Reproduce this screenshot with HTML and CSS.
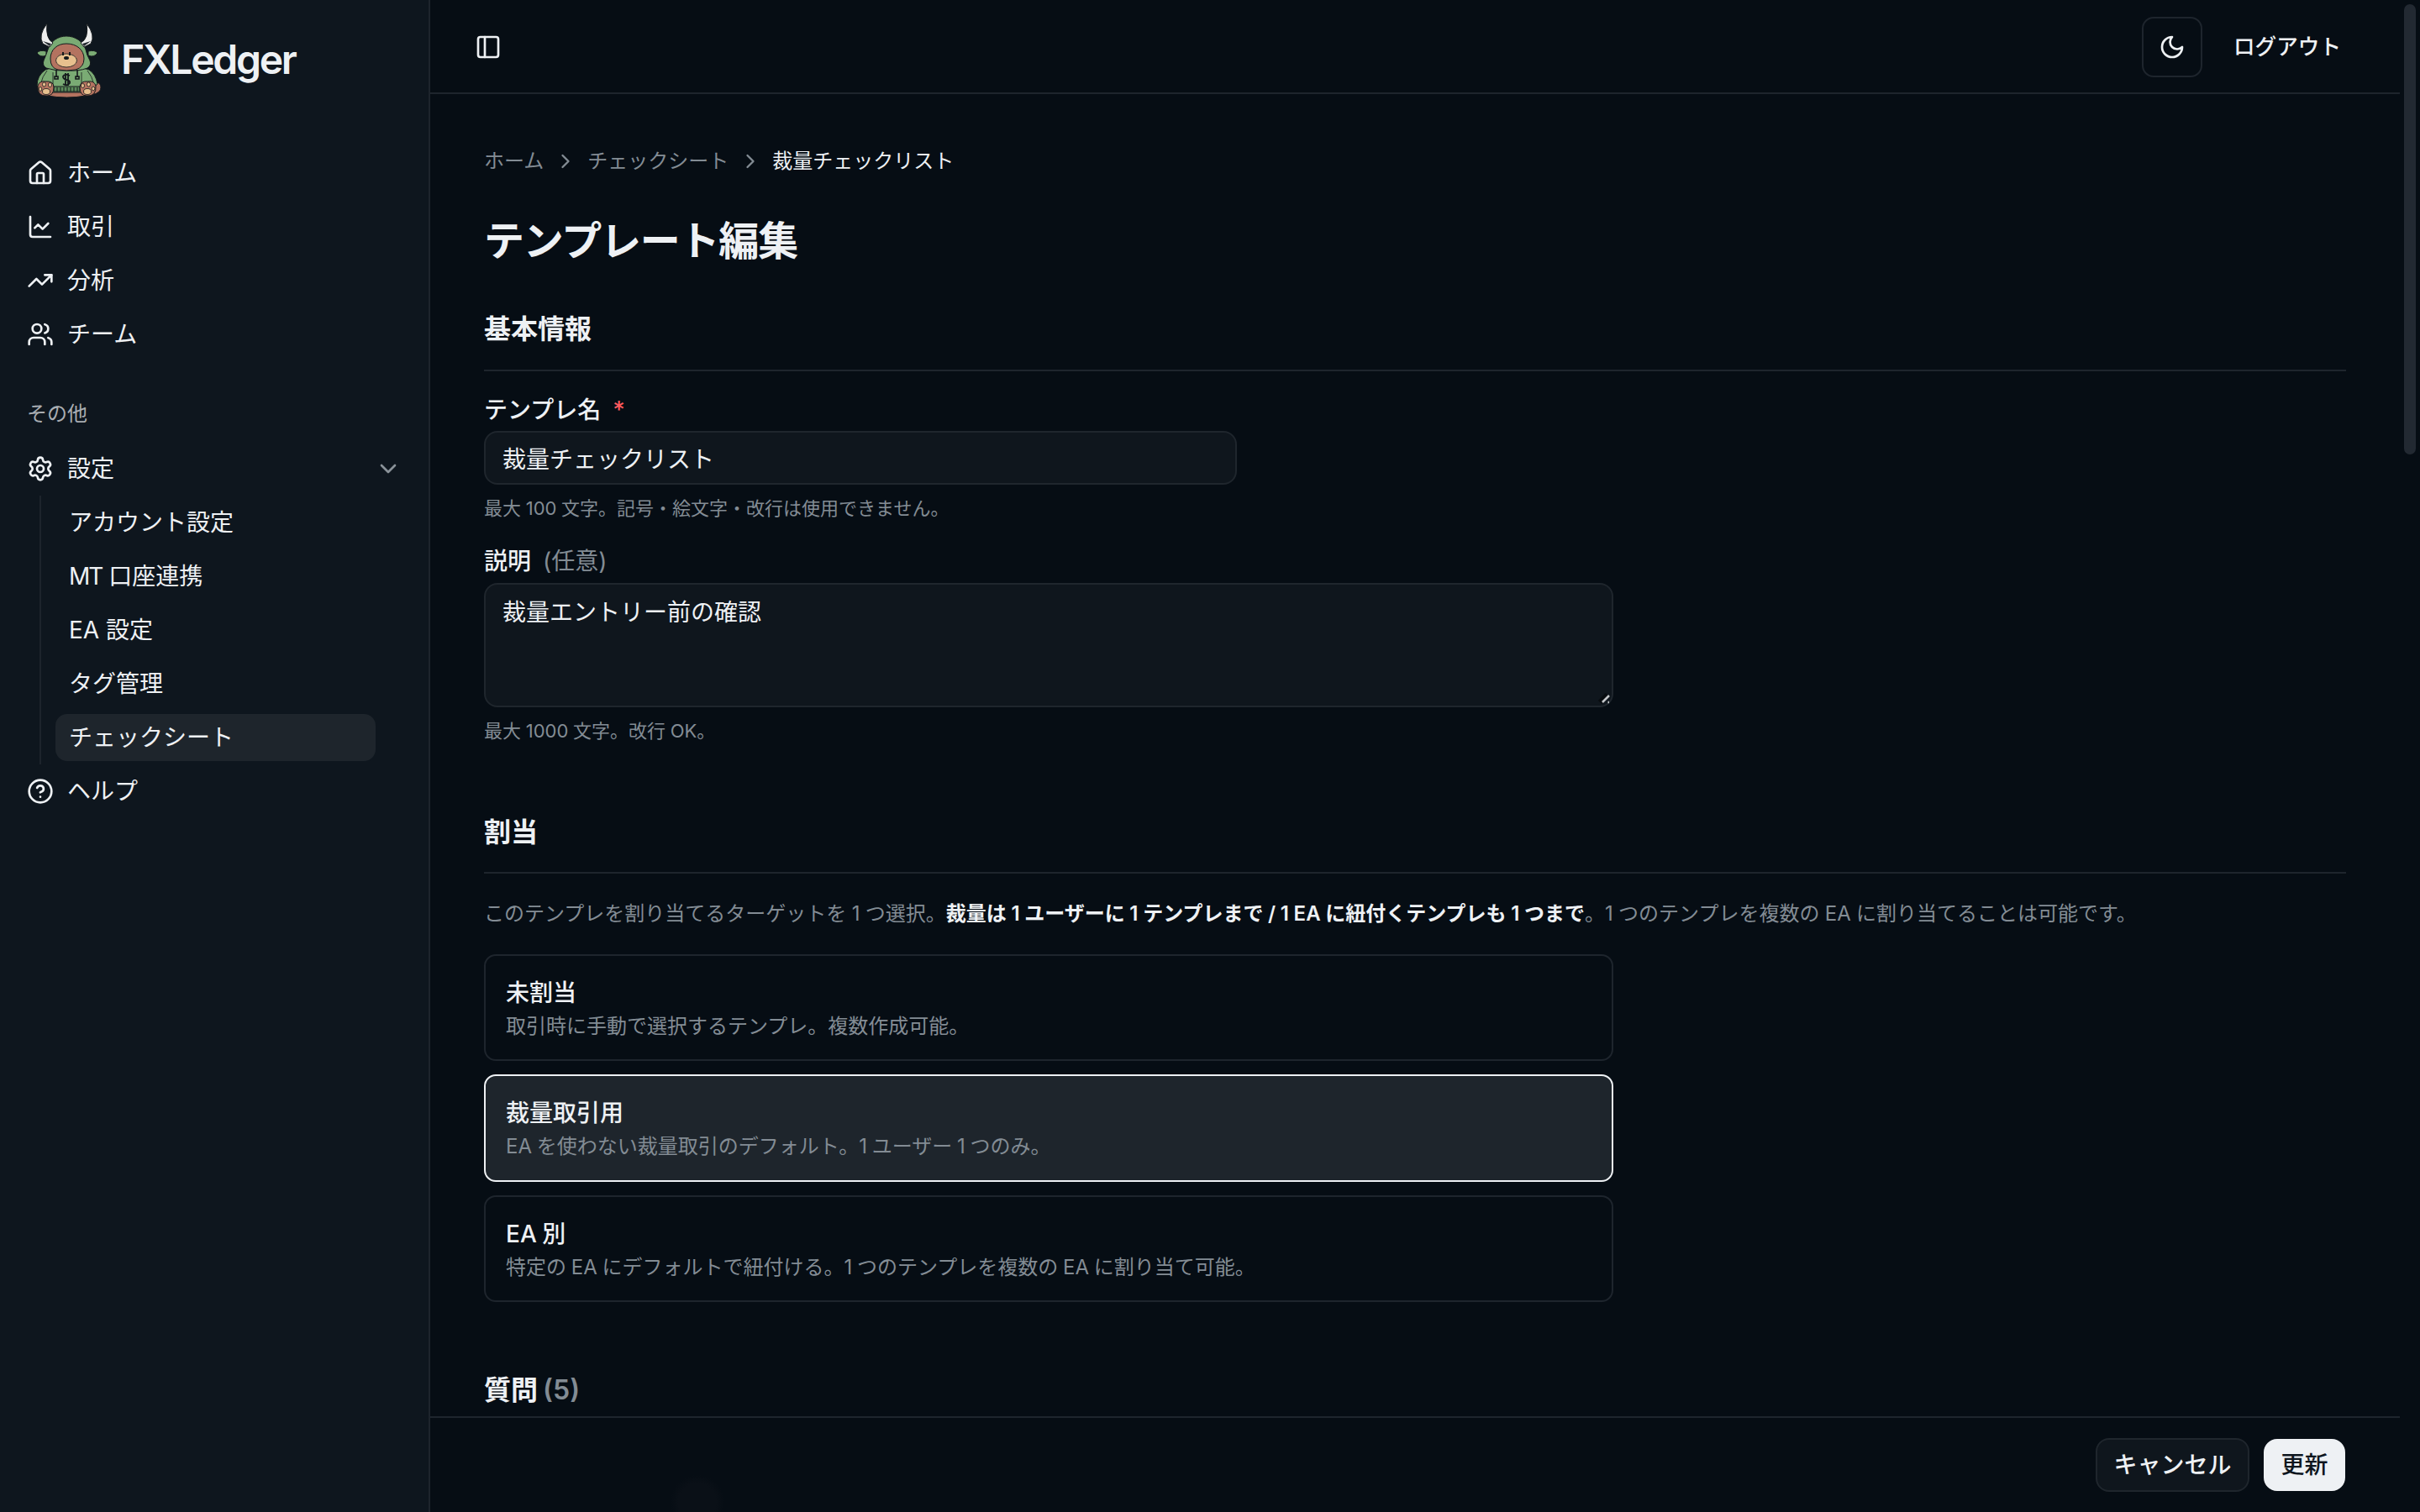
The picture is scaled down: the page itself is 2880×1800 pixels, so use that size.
FILE: index.html
```html
<!DOCTYPE html>
<html lang="ja">
<head>
<meta charset="utf-8">
<title>テンプレート編集 | FXLedger</title>
<link rel="stylesheet" href="styles.css">
</head>
<body>
<div class="layout">
	<!-- サイドバー -->
	<aside class="sidebar">
		<a class="brand">
			<svg class="mascot" viewBox="0 0 110 110">
				<!-- しっぽ・胴体 -->
				<path d="M79 82q4-5 9-3q4 5 0 10q-4 4-9 3z" fill="#b47360" stroke="#14191c"/>
				<path d="M30 88q20-6 38 0l4 6q-22 4-46 0z" fill="#b47360" stroke="#14191c"/>
				<!-- パーカー -->
				<path d="M24 63Q14 70 14 82L24 90H74L86 80Q84 68 76 63Q62 58 50 63Q36 58 24 63Z" fill="#7aab74" stroke="#14191c"/>
				<path d="M26 64q-6 8-7 14M74 64q6 8 7 14M33 66v18M67 66v18" fill="none" stroke="#14191c" stroke-width=".8"/>
				<path d="M34 83h31v6H34z" fill="#5c8c5b" stroke="#14191c"/>
				<path d="M38 84v5M42 84v5M46 84v5M50 84v5M54 84v5M58 84v5M62 84v5" stroke="#14191c" stroke-width="1"/>
				<!-- 耳 -->
				<path d="M25 41q-8-2-11 2q4 6 11 3zM75 41q8-2 11 2q-4 6-11 3z" fill="#7aab74" stroke="#14191c"/>
				<!-- フード -->
				<path d="M49 23C39 23 30 29 27 39Q25 45 22 52Q20 58 25 61Q37 65 49 64Q64 65 74 61Q79 58 77 52Q73 45 72 39C69 29 59 23 49 23Z" fill="#7aab74" stroke="#14191c"/>
				<!-- 角 -->
				<path d="M26 8Q15 22 21 32L29 36L33 31Q24 26 26 8Z" fill="#eee" stroke="#14191c"/>
				<path d="M73 8Q84 22 78 32L70 36L66 31Q76 26 73 8Z" fill="#eee" stroke="#14191c"/>
				<path d="M21 29l8 6 2-3zM78 29l-8 6-2-3z" fill="#252b31"/>
				<!-- 顔 -->
				<path d="M49 32C38 32 30 39 30 50Q30 61 39 63Q49 65 60 63Q70 60 70 50C70 39 61 32 49 32Z" fill="#b47360" stroke="#14191c"/>
				<ellipse cx="49" cy="52" rx="12.5" ry="8" fill="#e8c08e" stroke="#14191c" stroke-width=".8"/>
				<path d="M45 42v4M53 42v4" stroke="#14191c" stroke-width="2"/>
				<ellipse cx="49" cy="49" rx="3" ry="2" fill="#14191c"/>
				<!-- ひも・ロゴ -->
				<path d="M37 63v9M62 63v9M35 71h4v3h-4zM60 71h4v3h-4z" fill="#7aab74" stroke="#14191c" stroke-width="1.6"/>
				<path d="M53 70q-6-3-8 1q0 3 4 4q5 1 4 4q-3 4-8 1M48 67v15M51 67v15" fill="none" stroke="#14191c" stroke-width="1.8"/>
				<!-- 足 -->
				<path d="M15 82q2-6 9-5q10-1 10 7q0 10-8 10q-12 1-11-12z" fill="#b47360" stroke="#14191c"/>
				<path d="M65 84q0-8 10-7q7-1 9 5q1 13-11 12q-8 0-8-10z" fill="#b47360" stroke="#14191c"/>
				<g fill="#e8c08e" stroke="#14191c" stroke-width=".8">
					<ellipse cx="25" cy="89" rx="4.5" ry="3.5"/>
					<ellipse cx="18" cy="86" rx="1.8" ry="2.4"/>
					<ellipse cx="22.5" cy="80.5" rx="2" ry="2.6"/>
					<ellipse cx="29.5" cy="81" rx="2" ry="2.6"/>
					<ellipse cx="74" cy="89" rx="4.5" ry="3.5"/>
					<ellipse cx="68.5" cy="82" rx="2" ry="2.6"/>
					<ellipse cx="75.5" cy="80.5" rx="2" ry="2.6"/>
					<ellipse cx="81" cy="85.5" rx="1.8" ry="2.4"/>
				</g>
			</svg>
			<span class="brand-name">FXLedger</span>
		</a>

		<nav class="menu">
			<a class="menu-item">
				<svg class="icon" viewBox="0 0 24 24"><path d="M15 21v-8a1 1 0 0 0-1-1h-4a1 1 0 0 0-1 1v8"/><path d="M3 10a2 2 0 0 1 .709-1.528l7-5.999a2 2 0 0 1 2.582 0l7 5.999A2 2 0 0 1 21 10v9a2 2 0 0 1-2 2H5a2 2 0 0 1-2-2z"/></svg>
				<span>ホーム</span>
			</a>
			<a class="menu-item">
				<svg class="icon" viewBox="0 0 24 24"><path d="M3 3v16a2 2 0 0 0 2 2h16"/><path d="m19 9-5 5-4-4-3 3"/></svg>
				<span>取引</span>
			</a>
			<a class="menu-item">
				<svg class="icon" viewBox="0 0 24 24"><path d="M16 7h6v6"/><path d="m22 7-8.5 8.5-5-5L2 17"/></svg>
				<span>分析</span>
			</a>
			<a class="menu-item">
				<svg class="icon" viewBox="0 0 24 24"><path d="M16 21v-2a4 4 0 0 0-4-4H6a4 4 0 0 0-4 4v2"/><circle cx="9" cy="7" r="4"/><path d="M22 21v-2a4 4 0 0 0-3-3.87"/><path d="M16 3.13a4 4 0 0 1 0 7.75"/></svg>
				<span>チーム</span>
			</a>
		</nav>

		<div class="menu-label">その他</div>
		<nav class="menu menu-other">
			<a class="menu-item">
				<svg class="icon" viewBox="0 0 24 24"><path d="M9.671 4.136a2.34 2.34 0 0 1 4.659 0 2.34 2.34 0 0 0 3.319 1.915 2.34 2.34 0 0 1 2.33 4.033 2.34 2.34 0 0 0 0 3.831 2.34 2.34 0 0 1-2.33 4.033 2.34 2.34 0 0 0-3.319 1.915 2.34 2.34 0 0 1-4.659 0 2.34 2.34 0 0 0-3.32-1.915 2.34 2.34 0 0 1-2.33-4.033 2.34 2.34 0 0 0 0-3.831A2.34 2.34 0 0 1 6.35 6.051a2.34 2.34 0 0 0 3.319-1.915"/><circle cx="12" cy="12" r="3"/></svg>
				<span>設定</span>
				<svg class="icon chevron" viewBox="0 0 24 24"><path d="m6 9 6 6 6-6"/></svg>
			</a>
			<div class="submenu">
				<a class="submenu-item">アカウント設定</a>
				<a class="submenu-item"><span class="mt">MT</span> 口座連携</a>
				<a class="submenu-item">EA 設定</a>
				<a class="submenu-item">タグ管理</a>
				<a class="submenu-item active">チェックシート</a>
			</div>
			<a class="menu-item">
				<svg class="icon" viewBox="0 0 24 24"><circle cx="12" cy="12" r="10"/><path d="M9.09 9a3 3 0 0 1 5.83 1c0 2-3 3-3 3"/><path d="M12 17h.01"/></svg>
				<span>ヘルプ</span>
			</a>
		</nav>
	</aside>

	<!-- メイン -->
	<div class="main">
		<header class="topbar">
			<svg class="icon" viewBox="0 0 24 24"><rect width="18" height="18" x="3" y="3" rx="2"/><path d="M9 3v18"/></svg>
			<div class="topbar-actions">
				<button class="theme-btn"><svg class="icon" viewBox="0 0 24 24"><path d="M12 3a6 6 0 0 0 9 9 9 9 0 1 1-9-9Z"/></svg></button>
				<button class="logout-btn">ログアウト</button>
			</div>
		</header>

		<main class="content">
			<div class="breadcrumb">
				<a>ホーム</a>
				<svg class="icon" viewBox="0 0 24 24"><path d="m9 18 6-6-6-6"/></svg>
				<a>チェックシート</a>
				<svg class="icon" viewBox="0 0 24 24"><path d="m9 18 6-6-6-6"/></svg>
				<span class="current">裁量チェックリスト</span>
			</div>
			<h1>テンプレート編集</h1>

			<section class="basic">
				<h2>基本情報</h2>
				<label class="label">テンプレ名<span class="required">*</span></label>
				<input class="control" type="text" value="裁量チェックリスト">
				<p class="hint">最大 100 文字。記号・絵文字・改行は使用できません。</p>
				<label class="label label-desc">説明<span class="optional">(任意)</span></label>
				<div class="textarea-wrap">
					<textarea class="control">裁量エントリー前の確認</textarea>
					<svg class="resizer" viewBox="0 0 16 16"><path class="resizer-bg" d="M3 13 12 4"/><path d="M6 13l8-8M12.500 13h1.500"/></svg>
				</div>
				<p class="hint">最大 1000 文字。改行 OK。</p>
			</section>

			<section class="assign">
				<h2>割当</h2>
				<p class="lead">このテンプレを割り当てるターゲットを 1 つ選択。<strong>裁量は 1 ユーザーに 1 テンプレまで / 1 EA に紐付くテンプレも 1 つまで</strong>。1 つのテンプレを複数の EA に割り当てることは可能です。</p>
				<div class="options">
					<div class="option">
						<div class="option-title">未割当</div>
						<div class="option-desc">取引時に手動で選択するテンプレ。複数作成可能。</div>
					</div>
					<div class="option selected">
						<div class="option-title">裁量取引用</div>
						<div class="option-desc">EA を使わない裁量取引のデフォルト。1 ユーザー 1 つのみ。</div>
					</div>
					<div class="option">
						<div class="option-title">EA 別</div>
						<div class="option-desc">特定の EA にデフォルトで紐付ける。1 つのテンプレを複数の EA に割り当て可能。</div>
					</div>
				</div>
			</section>

			<section class="questions">
				<h2>質問 <span class="count">(5)</span></h2>
			</section>
		</main>

		<footer class="action-bar">
			<button class="btn btn-outline">キャンセル</button>
			<button class="btn btn-primary">更新</button>
		</footer>
	</div>

	<div class="scrollbar"><div class="scroll-thumb"></div></div>
</div>
</body>
</html>
```
FILE: styles.css
```css
*{padding: 0;margin: 0;box-sizing: border-box}
html,body{
	width: 100%;
	height: 100%;
	overflow: hidden;
}
body{
	background: #060d14;
	color: #eef1f4;
	font-family: Inter, "Noto Sans CJK JP", sans-serif;
	font-size: 28px;
	line-height: 40px;
}
button,input,textarea{
	font: inherit;
	color: inherit;
}
.icon{
	width: 32px;
	height: 32px;
	flex: none;
	fill: none;
	stroke: currentColor;
	stroke-width: 2;
	stroke-linecap: round;
	stroke-linejoin: round;
}
.layout{
	display: flex;
	height: 100%;
}

/* サイドバー */
.sidebar{
	width: 512px;
	flex: none;
	background: #0e161e;
	border-right: 2px solid #1d242c;
}
.brand{
	display: flex;
	align-items: center;
	height: 110px;
	margin: 20px 0 48px 30px;
}
.mascot{
	width: 110px;
	height: 110px;
}
.brand-name{
	margin: -8px 0 0 4px;
	font-size: 48px;
	font-weight: 600;
	letter-spacing: -0.047em;
}
.menu{
	display: flex;
	flex-direction: column;
	gap: 8px;
}
.menu-item{
	display: flex;
	align-items: center;
	gap: 16px;
	height: 56px;
	padding: 0 32px;
}
.chevron{
	margin-left: auto;
	color: #8a9299;
}
.menu-label{
	margin: 47px 0 17px 32px;
	font-size: 24px;
	color: #a9adb2;
}
.menu-other{gap: 4px}
.submenu{
	display: flex;
	flex-direction: column;
	gap: 8px;
	margin-left: 47px;
	padding: 4px 63px 4px 17px;
	border-left: 2px solid #1d242c;
}
.submenu-item{
	height: 56px;
	padding: 0 16px;
	line-height: 56px;
	border-radius: 14px;
}
.submenu-item.active{background: #1e252c}
.mt{letter-spacing: -2px}

/* ヘッダー */
.main{
	display: flex;
	flex-direction: column;
	flex: 1;
	min-width: 0;
}
.topbar{
	display: flex;
	align-items: center;
	justify-content: space-between;
	flex: none;
	height: 112px;
	padding: 1px 64px 0 53px;
	border-bottom: 2px solid #1e252d;
}
.topbar-actions{
	display: flex;
	align-items: center;
	gap: 16px;
}
.theme-btn{
	display: flex;
	align-items: center;
	justify-content: center;
	width: 72px;
	height: 72px;
	background: none;
	border: 2px solid #1e252d;
	border-radius: 14px;
}
.logout-btn{
	padding: 0 6px 0 21px;
	background: none;
	border: 0;
	font-size: 25.6px;
	font-weight: 500;
}

/* コンテンツ */
.content{
	flex: 1;
	min-height: 0;
	overflow: hidden;
	padding: 64px 64px 0;
}
.breadcrumb{
	display: flex;
	align-items: center;
	gap: 12px;
	height: 32px;
	font-size: 24px;
	color: #838c94;
}
.breadcrumb .icon{
	width: 28px;
	height: 28px;
}
.breadcrumb .current{color: #eef1f4}
h1{
	margin-top: 47px;
	font-size: 48px;
	font-weight: 600;
	line-height: 64px;
	letter-spacing: -0.025em;
}
h2{
	padding-bottom: 23px;
	border-bottom: 2px solid #1e252d;
	font-size: 32px;
	font-weight: 600;
	line-height: 50px;
	word-spacing: -2px;
}
.basic{margin-top: 48px}
.label{
	display: flex;
	align-items: center;
	height: 28px;
	margin: 32px 0 11px;
	font-weight: 500;
}
.required{
	margin-left: 14px;
	color: #ff5a5f;
}
.optional{
	margin-left: 14px;
	font-weight: 400;
	color: #838c94;
}
.control{
	display: block;
	width: 896px;
	height: 64px;
	padding: 0 20px;
	background: #0f161d;
	border: 2px solid #1f262d;
	border-radius: 16px;
	outline: 0;
}
.hint{
	margin-top: 12px;
	font-size: 22px;
	line-height: 32px;
	color: #838c94;
	word-spacing: -.5px;
}
.label-desc{
	margin-top: 33px;
	margin-bottom: 12px;
}
.textarea-wrap{
	position: relative;
	width: 1344px;
}
.textarea-wrap .control{
	width: 100%;
	height: 148px;
	padding-top: 13px;
	resize: none;
}
.resizer{
	position: absolute;
	right: 3px;
	bottom: 3px;
	width: 16px;
	height: 16px;
	fill: none;
	stroke: #c4c7ca;
	stroke-width: 2.5;
}
.resizer-bg{
	stroke: #070b0f;
	stroke-width: 6;
}
.assign{margin-top: 80px}
.assign h2{padding-bottom: 22px}
.lead{
	margin-top: 28px;
	font-size: 24px;
	color: #838c94;
	white-space: nowrap;
	word-spacing: -.4px;
}
.lead strong{
	font-weight: 600;
	color: #eef1f4;
}
.options{
	display: flex;
	flex-direction: column;
	gap: 16px;
	width: 1344px;
	margin-top: 28px;
}
.option{
	height: 127.3px;
	padding: 24px;
	border: 2px solid #1e252d;
	border-radius: 14px;
}
.option.selected{
	background: #1e252c;
	border-color: #eef1f4;
}
.option-title{
	font-weight: 500;
	word-spacing: -1px;
}
.option-desc{
	font-size: 24px;
	color: #838c94;
	word-spacing: -1px;
}
.questions{margin-top: 80px}
.count{color: #838c94}

/* 下部の操作バー */
.action-bar{
	display: flex;
	align-items: center;
	justify-content: flex-end;
	gap: 17px;
	flex: none;
	height: 114px;
	padding: 0 65px 0 0;
	border-top: 2px solid #1e252d;
	background: radial-gradient(circle 32px at 318px 100px, #0a1017 0 70%, transparent);
}
.btn{
	width: 183px;
	height: 64px;
	border: 2px solid #1f262d;
	border-radius: 16px;
	font-weight: 500;
}
.btn-outline{background: #0f161d}
.btn-primary{
	width: 97px;
	height: 62px;
	background: #eef1f4;
	border-color: #eef1f4;
	color: #0e161e;
}

/* スクロールバー */
.scrollbar{
	flex: none;
	width: 24px;
	padding: 5px 5px 0;
}
.scroll-thumb{
	height: 536px;
	border-radius: 7px;
	background: #222932;
}
```
